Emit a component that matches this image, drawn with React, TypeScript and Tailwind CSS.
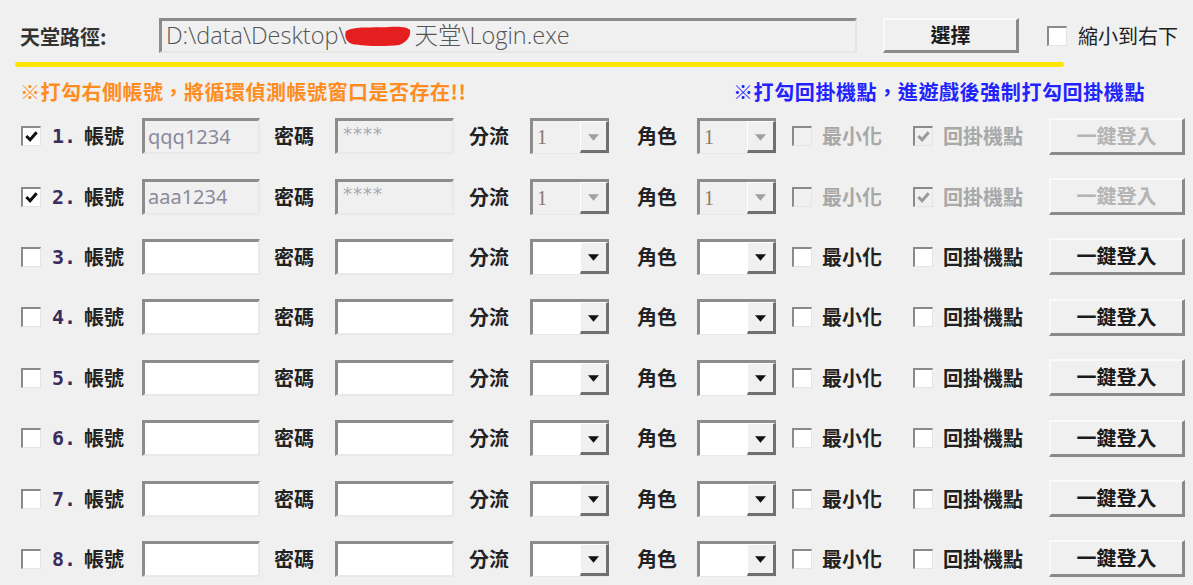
import React from "react";

function Check({ checked = false, disabled = false, cls = "" }: { checked?: boolean; disabled?: boolean; cls?: string }) {
  return (
    <div
      className={
        "relative w-[20px] h-[20px] border-t-2 border-l-2 border-r border-b border-t-[#8a8a8a] border-l-[#8a8a8a] border-r-[#e4e4e4] border-b-[#e4e4e4] " +
        (disabled ? "bg-[#f0f0f0] " : "bg-white ") +
        cls
      }
    >
      {checked && (
        <svg viewBox="0 0 16 16" className="absolute left-[1px] top-[1px] w-[15px] h-[15px]">
          <path d="M2.5 7.5 L6.5 11.5 L13.5 3.5" fill="none" stroke={disabled ? "#9a9a9a" : "#111"} strokeWidth="3.2" />
        </svg>
      )}
    </div>
  );
}

function Sunken({ value, disabled, w, dots }: { value?: string; disabled?: boolean; w: string; dots?: boolean }) {
  return (
    <div
      className={
        "h-[36px] flex items-center border-t-[3px] border-l-[3px] border-r-2 border-b-2 border-t-[#8c8c8c] border-l-[#8c8c8c] border-r-[#e9e9e9] border-b-[#e9e9e9] " +
        w +
        (disabled ? " bg-[#f0f0f0]" : " bg-white")
      }
    >
      {value && (
        <span className="pl-[3px] text-[20px] leading-none text-[#8a8a9a] font-['Noto_Sans','DejaVu_Sans',sans-serif]">{value}</span>
      )}
      {dots && (
        <span className="pl-[5px] -mt-[6px] text-[18px] leading-none tracking-[1px] text-[#a8a8b0] font-['DejaVu_Sans',sans-serif]">****</span>
      )}
    </div>
  );
}

function Combo({ value, disabled }: { value?: string; disabled?: boolean }) {
  return (
    <div className="w-[79px] h-[36px] flex border-t-[3px] border-l-[3px] border-b border-t-[#8c8c8c] border-l-[#8c8c8c] border-b-[#e9e9e9]">
      <div className={"flex-1 flex items-center " + (disabled ? "bg-[#f0f0f0]" : "bg-white")}>
        {value && (
          <span className="pl-[4px] text-[20px] leading-none text-[#8a7a6a] font-['Liberation_Serif',serif]">{value}</span>
        )}
      </div>
      <div className="w-[29px] flex items-center justify-center bg-[#f0f0f0] border-l border-t border-l-[#ffffff] border-t-[#ffffff] border-r-[3px] border-b-[3px] border-r-[#707070] border-b-[#707070]">
        <svg viewBox="0 0 10 6" className="w-[11px] h-[7px] mt-[2px]">
          <path d="M0 0 L10 0 L5 6 Z" fill={disabled ? "#a0a0a0" : "#111"} />
        </svg>
      </div>
    </div>
  );
}

function Btn({ label, disabled, w, h }: { label: string; disabled?: boolean; w: string; h: string }) {
  return (
    <div
      className={
        "flex items-center justify-center bg-[#f0f0f0] border-t-2 border-l-2 border-t-[#fafafa] border-l-[#fafafa] border-r-[3px] border-b-[3px] border-r-[#8a8a8a] border-b-[#8a8a8a] text-[20px] font-bold " +
        w +
        " " +
        h +
        (disabled ? " text-[#b4b4b4]" : " text-[#1a1a1a]")
      }
    >
      {label}
    </div>
  );
}

const rows = [
  { n: "1.", acc: "qqq1234", on: true },
  { n: "2.", acc: "aaa1234", on: true },
  { n: "3." },
  { n: "4." },
  { n: "5." },
  { n: "6." },
  { n: "7." },
  { n: "8." },
];

export default function App() {
  return (
    <div className="w-[1193px] h-[585px] overflow-hidden bg-[#f0f0f0] font-['Noto_Sans_CJK_TC','Noto_Sans',sans-serif] text-[#222]">
      {/* header */}
      <div className="flex items-center pt-[18px] h-[35px] box-content">
        <div className="w-[159px] pl-[20px] text-[20px] font-bold text-[#333] leading-none pt-[2px]">天堂路徑:</div>
        <div className="w-[698px] h-[35px] flex items-center border-t-[3px] border-l-[3px] border-r-2 border-b-2 border-t-[#8c8c8c] border-l-[#8c8c8c] border-r-[#e6e6e6] border-b-[#e6e6e6] bg-[#f0f0f0]">
          <span className="pl-[4px] text-[23.5px] leading-none text-[#555] font-['Open_Sans',sans-serif] font-light whitespace-pre">D:\data\Desktop\</span>
          <svg viewBox="0 0 68 22" className="w-[68px] h-[22px] -ml-[2px]">
            <path d="M2 6 C10 1, 30 3, 45 2 C55 1, 64 2, 66 5 C67 10, 64 17, 55 20 C40 22, 20 21, 8 19 C2 17, 0 11, 2 6 Z" fill="#e51f1f" />
          </svg>
          <span className="pl-[2px] text-[23.5px] leading-none text-[#555] font-['Open_Sans','Noto_Sans_CJK_TC',sans-serif] font-light whitespace-pre">天堂\Login.exe</span>
        </div>
        <div className="ml-[26px]">
          <Btn label="選擇" w="w-[136px]" h="h-[35px]" />
        </div>
        <Check cls="ml-[28px]" />
        <span className="ml-[11px] text-[20px] leading-none text-[#222]">縮小到右下</span>
      </div>

      {/* yellow line */}
      <div className="ml-[15px] mt-[9px] w-[1049px] h-[5px] rounded-full bg-[#ffe500]" />

      {/* notes */}
      <div className="flex mt-[12px] h-[26px] items-center">
        <span className="pl-[20px] w-[733px] text-[20px] tracking-[0.5px] font-bold text-[#ff8c1e] leading-none">※打勾右側帳號，將循環偵測帳號窗口是否存在!!</span>
        <span className="text-[20px] tracking-[0.6px] font-bold text-[#2222ff] leading-none">※打勾回掛機點，進遊戲後強制打勾回掛機點</span>
      </div>

      {/* rows */}
      <div className="mt-[1px] pl-[21px]">
        {rows.map((r) => {
          const dis = !!r.on;
          return (
            <div
              key={r.n}
              className="h-[60.4px] grid grid-cols-[31px_32px_58px_132px_61px_134px_61px_107px_60px_95px_30px_91px_30px_106px_136px] items-center text-[20px] leading-none"
            >
              <Check checked={!!r.on} />
              <span className="font-bold text-[#3a2c5a] font-['DejaVu_Sans_Mono',monospace]">{r.n}</span>
              <span className="font-bold">帳號</span>
              <Sunken value={r.acc} disabled={dis} w="w-[118px]" />
              <span className="font-bold">密碼</span>
              <Sunken disabled={dis} dots={dis} w="w-[119px]" />
              <span className="font-bold">分流</span>
              <Combo value={dis ? "1" : undefined} disabled={dis} />
              <span className="font-bold">角色</span>
              <Combo value={dis ? "1" : undefined} disabled={dis} />
              <Check disabled={dis} />
              <span className={"font-bold " + (dis ? "text-[#a8a8a8]" : "text-[#222]")}>最小化</span>
              <Check checked={dis} disabled={dis} />
              <span className={"font-bold " + (dis ? "text-[#a8a8a8]" : "text-[#222]")}>回掛機點</span>
              <Btn label="一鍵登入" disabled={dis} w="w-[136px]" h="h-[37px]" />
            </div>
          );
        })}
      </div>
    </div>
  );
}
